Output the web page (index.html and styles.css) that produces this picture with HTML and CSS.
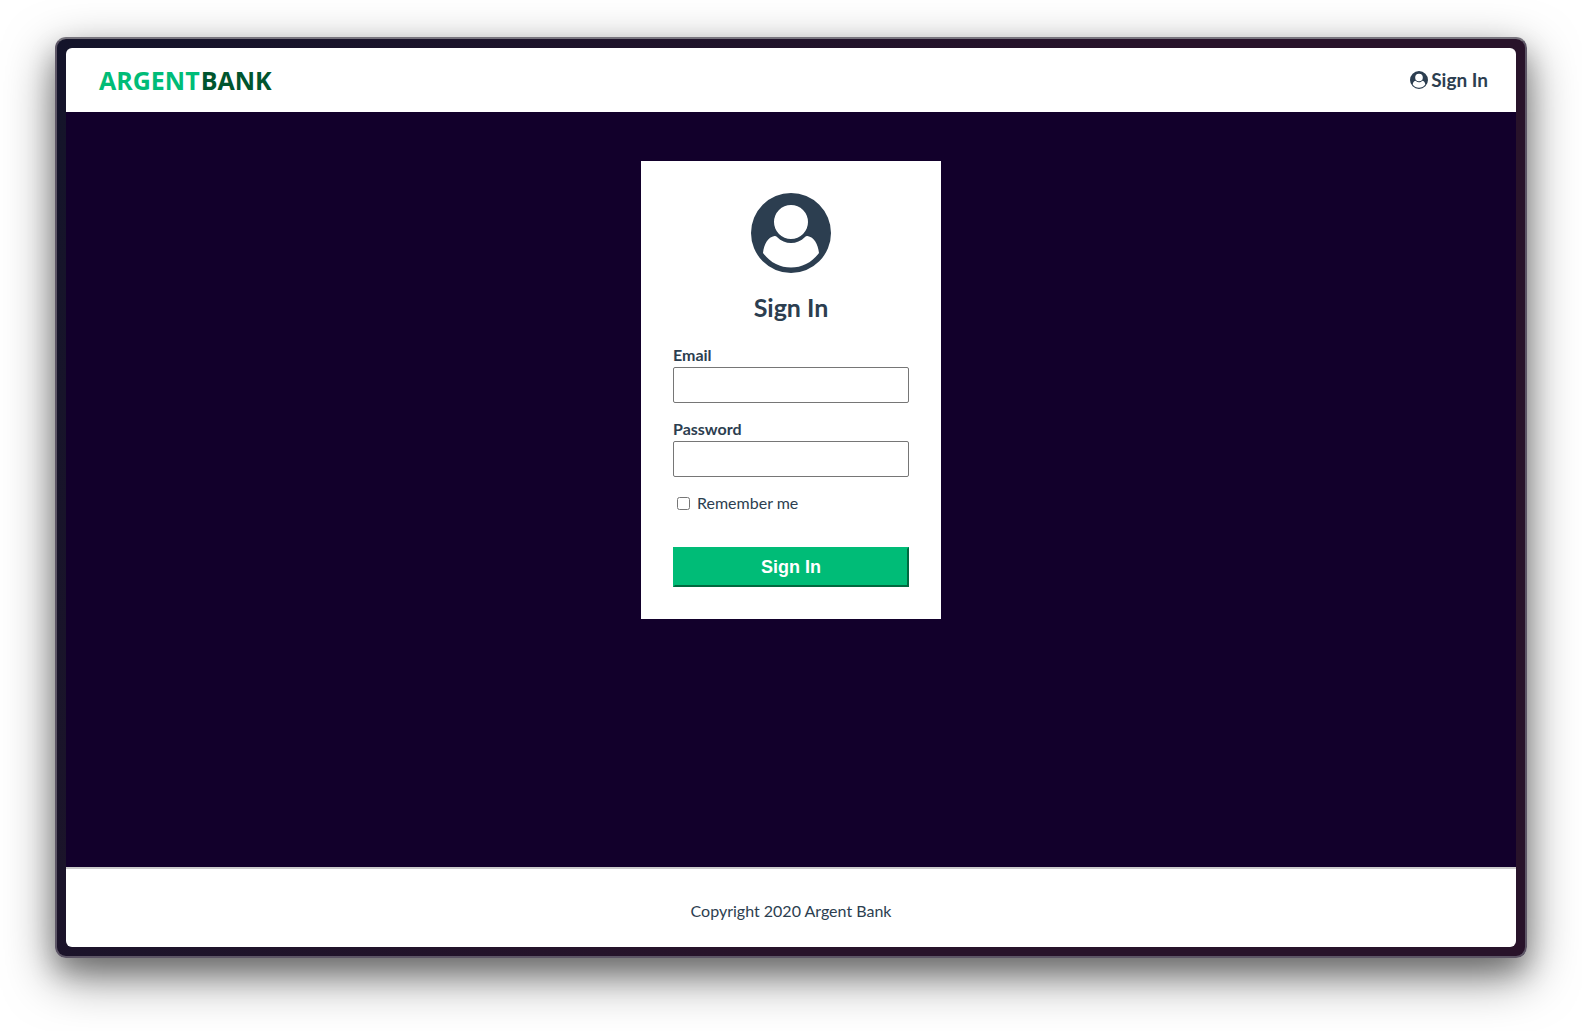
FILE: index.html
```html
<!DOCTYPE html>
<html lang="en">
<head>
<meta charset="utf-8">
<meta name="viewport" content="width=device-width, initial-scale=1">
<title>Argent Bank - Sign In</title>
<link rel="stylesheet" href="styles.css">
</head>
<body>
<svg class="sprite" aria-hidden="true">
  <symbol id="user-circle" viewBox="0 0 80 80">
    <path fill-rule="evenodd" d="M40 0a40 40 0 1 1 0 80a40 40 0 0 1 0-80ZM40 12a17 17 0 1 0 0 34a17 17 0 0 0 0-34ZM23.500 43C17 44 13 51 12 60C19 69.500 29 74.500 40 74.500S61 69.500 68 60C67 51 63 44 56.500 43Q55 42.800 54 44C46 52 34 52 26 44Q25 42.800 23.500 43Z"/>
  </symbol>
</svg>
<div class="frame">
  <div class="screen">
    <header class="main-nav">
      <a class="logo" href="#"><span class="logo-argent">ARGENT</span><span class="logo-bank">BANK</span></a>
      <a class="nav-item" href="#"><svg class="icon-small" aria-hidden="true"><use href="#user-circle"/></svg>Sign In</a>
    </header>
    <main class="main">
      <section class="card">
        <svg class="icon-large" aria-hidden="true"><use href="#user-circle"/></svg>
        <h1 class="title">Sign In</h1>
        <form class="form">
          <div class="field">
            <label class="field-label" for="email">Email</label>
            <input class="field-input" id="email" type="text">
          </div>
          <div class="field">
            <label class="field-label" for="password">Password</label>
            <input class="field-input" id="password" type="password">
          </div>
          <div class="remember">
            <input class="checkbox" id="remember" type="checkbox">
            <label for="remember">Remember me</label>
          </div>
          <button class="submit" type="button">Sign In</button>
        </form>
      </section>
    </main>
    <footer class="footer"><p class="footer-text">Copyright 2020 Argent Bank</p></footer>
  </div>
</div>
</body>
</html>
```
FILE: styles.css
```css
* {
  box-sizing: border-box;
}

body {
  margin: 0;
  min-height: 100vh;
  display: flex;
  padding: 37px 55px 73px;
  background: #fff;
  color: #2c3e50;
  font: 16px/20px Lato, sans-serif;
}

.sprite {
  position: absolute;
  width: 0;
  height: 0;
}

.frame {
  flex: 1;
  display: flex;
  padding: 9px;
  border: 2px solid #5d5666;
  border-top-color: #77747d;
  border-radius: 11px;
  background: linear-gradient(115deg, #14142a, #28132a 60%);
  box-shadow: 0 18px 50px rgba(0, 0, 0, 0.5), 0 14px 26px rgba(0, 0, 0, 0.25);
}

.screen {
  flex: 1;
  display: flex;
  flex-direction: column;
  overflow: hidden;
  border-radius: 6px;
  background: #fff;
}

.main-nav {
  display: flex;
  justify-content: space-between;
  align-items: center;
  height: 64px;
  padding: 0 28px 0 33px;
}

.logo {
  display: flex;
  gap: 1px;
  font: 700 25px/32px "Open Sans", sans-serif;
  text-decoration: none;
}

.logo-argent {
  color: #00bc77;
}

.logo-bank {
  color: #00552e;
}

.nav-item {
  display: flex;
  align-items: center;
  gap: 3px;
  color: #2c3e50;
  font-size: 19px;
  font-weight: 700;
  text-decoration: none;
}

.icon-small {
  width: 18px;
  height: 18px;
  fill: #2c3e50;
}

.main {
  flex: 1;
  padding: 49px 0;
  background: #12002b;
}

.card {
  display: flex;
  flex-direction: column;
  align-items: center;
  width: 300px;
  margin: 0 auto;
  padding: 32px;
  background: #fff;
}

.icon-large {
  width: 80px;
  height: 80px;
  fill: #2c3e50;
}

.title {
  margin: 18px 0 21px;
  font-size: 25px;
  line-height: 32px;
}

.form {
  width: 100%;
}

.field {
  display: flex;
  flex-direction: column;
  gap: 1px;
  margin-bottom: 15px;
}

.field-label {
  line-height: 22px;
  font-weight: 700;
}

.field-input {
  width: 100%;
  height: 36px;
  padding: 5px;
  border: 1px solid #767676;
  border-radius: 2px;
  background: #fff;
  font-size: 19px;
}

.remember {
  display: flex;
  align-items: center;
  gap: 7px;
  height: 22px;
  padding-left: 4px;
}

.checkbox {
  width: 13px;
  height: 13px;
  margin: 0;
}

.submit {
  display: block;
  width: 100%;
  height: 40px;
  margin-top: 33px;
  padding: 0;
  border: 2px solid;
  border-color: #00bc77 #00693f #00693f #00bc77;
  background: #00bc77;
  color: #fff;
  font: 700 18px/20px "Liberation Sans", sans-serif;
}

.footer {
  padding: 32px 0 26px;
  border-top: 2px solid #ccc;
}

.footer-text {
  margin: 0;
  text-align: center;
}
```
